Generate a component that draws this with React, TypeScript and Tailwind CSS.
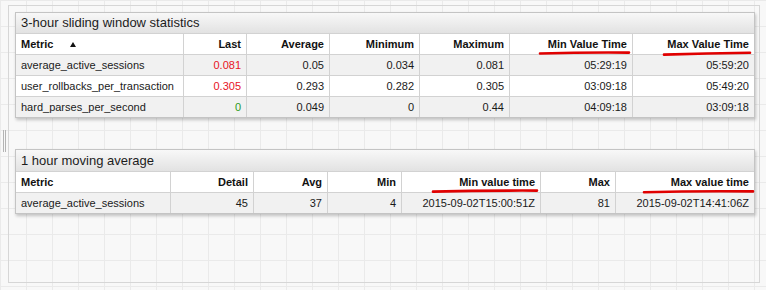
import React from "react";

type Col = { label: string; w: string; align: "left" | "right"; sort?: boolean };

const cols1: Col[] = [
  { label: "Metric", w: "w-[168px]", align: "left", sort: true },
  { label: "Last", w: "w-[63px]", align: "right" },
  { label: "Average", w: "w-[83px]", align: "right" },
  { label: "Minimum", w: "w-[90px]", align: "right" },
  { label: "Maximum", w: "w-[90px]", align: "right" },
  { label: "Min Value Time", w: "w-[123px]", align: "right" },
  { label: "Max Value Time", w: "flex-1", align: "right" },
];

const rows1: { v: string; c?: string }[][] = [
  [
    { v: "average_active_sessions" },
    { v: "0.081", c: "text-[#e8141f]" },
    { v: "0.05" },
    { v: "0.034" },
    { v: "0.081" },
    { v: "05:29:19" },
    { v: "05:59:20" },
  ],
  [
    { v: "user_rollbacks_per_transaction" },
    { v: "0.305", c: "text-[#e8141f]" },
    { v: "0.293" },
    { v: "0.282" },
    { v: "0.305" },
    { v: "03:09:18" },
    { v: "05:49:20" },
  ],
  [
    { v: "hard_parses_per_second" },
    { v: "0", c: "text-[#2c9a22]" },
    { v: "0.049" },
    { v: "0" },
    { v: "0.44" },
    { v: "04:09:18" },
    { v: "03:09:18" },
  ],
];

const cols2: Col[] = [
  { label: "Metric", w: "w-[155px]", align: "left" },
  { label: "Detail", w: "w-[83px]", align: "right" },
  { label: "Avg", w: "w-[74px]", align: "right" },
  { label: "Min", w: "w-[74px]", align: "right" },
  { label: "Min value time", w: "w-[139px]", align: "right" },
  { label: "Max", w: "w-[75px]", align: "right" },
  { label: "Max value time", w: "flex-1", align: "right" },
];

const rows2: { v: string; c?: string }[][] = [
  [
    { v: "average_active_sessions" },
    { v: "45" },
    { v: "37" },
    { v: "4" },
    { v: "2015-09-02T15:00:51Z" },
    { v: "81" },
    { v: "2015-09-02T14:41:06Z" },
  ],
];

function Panel({
  title,
  cols,
  rows,
  titleH,
}: {
  title: string;
  cols: Col[];
  rows: { v: string; c?: string }[][];
  titleH: string;
}) {
  return (
    <div className="w-[740px] border border-[#c4c4c4] bg-white shadow-[1px_2px_3px_rgba(0,0,0,0.22)]">
      <div
        className={`${titleH} flex items-center pl-[5px] text-[13px] text-[#1c1c1c] bg-[linear-gradient(to_bottom,#f8f8f8,#e2e2e2)]`}
      >
        {title}
      </div>
      <div className="flex h-[21px] border-t border-[#d2d2d2] bg-white">
        {cols.map((c, i) => (
          <div
            key={i}
            className={`${c.w} shrink-0 flex items-center px-[5px] text-[11px] font-bold text-[#111] ${
              i < cols.length - 1 ? "border-r border-[#d2d2d2]" : ""
            } ${c.align === "right" ? "justify-end" : "justify-start"}`}
          >
            <span>{c.label}</span>
            {c.sort && (
              <svg width="6" height="5" viewBox="0 0 6 5" className="ml-[17px]">
                <polygon points="3,0 6,5 0,5" fill="#111" />
              </svg>
            )}
          </div>
        ))}
      </div>
      {rows.map((r, ri) => (
        <div
          key={ri}
          className={`flex h-[21px] border-t border-[#d2d2d2] ${ri % 2 === 0 ? "bg-[#f1f1f1]" : "bg-white"}`}
        >
          {r.map((cell, i) => (
            <div
              key={i}
              className={`${cols[i].w} shrink-0 flex items-center px-[5px] text-[11px] ${cell.c ?? "text-[#1a1a1a]"} ${
                i < cols.length - 1 ? "border-r border-[#d2d2d2]" : ""
              } ${cols[i].align === "right" ? "justify-end" : "justify-start"}`}
            >
              {cell.v}
            </div>
          ))}
        </div>
      ))}
    </div>
  );
}

export default function App() {
  return (
    <div className="relative w-[766px] h-[290px] overflow-hidden bg-[#f8f8f8] bg-[linear-gradient(to_right,#eaeaea_1px,transparent_1px),linear-gradient(to_bottom,#eaeaea_1px,transparent_1px)] bg-[size:26px_26px] font-['Liberation_Sans',Arial,sans-serif]">
      <div className="absolute left-[3px] top-[130px] h-[22px] w-[1px] bg-[#b4b4b4]" />
      <div className="absolute left-[5px] top-[130px] h-[22px] w-[1px] bg-[#b4b4b4]" />
      <div className="pt-[5px] pl-[8px]">
        <div className="w-[752px] h-[278px] border border-[#d6d6d6] pt-[6px] pl-[6px] flex flex-col gap-[31px]">
          <Panel title="3-hour sliding window statistics" cols={cols1} rows={rows1} titleH="h-[20px]" />
          <Panel title="1 hour moving average" cols={cols2} rows={rows2} titleH="h-[21px]" />
        </div>
      </div>
      <svg className="absolute left-0 top-0 pointer-events-none" width="766" height="290">
        <g stroke="#e00000" strokeWidth="2.6" fill="none" strokeLinecap="round">
          <path d="M540 53.5 Q585 52.2 629 52.6" />
          <path d="M664 54.6 Q707 53.4 750 52.8" />
          <path d="M433 191.6 Q485 190.4 537 190.6" />
          <path d="M644 192.2 Q698 190.8 753 191.4" />
        </g>
      </svg>
    </div>
  );
}
